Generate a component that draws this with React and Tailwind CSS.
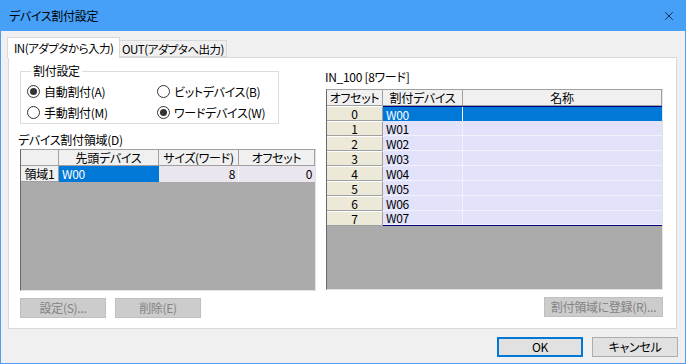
import { X } from 'lucide-react'

const font = "font-['Noto_Sans_CJK_JP',sans-serif] [font-feature-settings:'palt'] whitespace-nowrap tracking-[-0.3px]"

function Radio({ checked, label }) {
  return (
    <div className="flex items-center gap-[4px] h-[21px]">
      <span className="w-[13px] h-[13px] rounded-full border border-[#333] bg-white flex items-center justify-center">
        {checked && <span className="w-[7px] h-[7px] rounded-full bg-[#333]" />}
      </span>
      <span className="text-[12px] leading-[14px] text-black">{label}</span>
    </div>
  )
}

function Btn({ label, w, disabled, primary }) {
  const cls = disabled
    ? 'bg-[#cccccc] border border-[#bfbfbf] text-[#838383]'
    : primary
      ? 'bg-[#e1e1e1] border-2 border-[#0078d7] text-black'
      : 'bg-[#e1e1e1] border border-[#adadad] text-black'
  return (
    <div className={`${w} h-[20px] flex items-center justify-center text-[12px] leading-[14px] ${cls}`}>
      {label}
    </div>
  )
}

const hd = 'h-[16px] bg-[#f0f0f0] border-r border-b border-[#a0a0a0] flex items-center justify-center text-[12px] leading-[14px] overflow-hidden'

const devices = ['W00', 'W01', 'W02', 'W03', 'W04', 'W05', 'W06', 'W07']

export default function App() {
  return (
    <div className={`w-[686px] h-[364px] bg-[#f0f0f0] border-x border-b border-[#4a9ff5] flex flex-col ${font} text-black`}>
      {/* Title bar */}
      <div className="h-[31px] bg-[#46a0f8] flex items-center justify-between pl-[8px] pr-[9px] shrink-0">
        <span className="text-[12px] leading-[14px]">デバイス割付設定</span>
        <X className="w-[14px] h-[14px] text-black" strokeWidth={1.2} />
      </div>

      {/* Tabs */}
      <div className="flex items-end mt-[6px] pl-[6px] relative z-10 -mb-px">
        <div className="w-[113px] h-[21px] bg-white border border-b-0 border-[#d9d9d9] flex items-center pl-[6px] text-[11.5px] tracking-[-0.5px] leading-[14px]">
          IN(アダプタから入力)
        </div>
        <div className="w-[107px] h-[17px] bg-[#f0f0f0] border border-l-0 border-[#d9d9d9] flex items-center justify-center text-[11.5px] tracking-[-0.5px] leading-[14px] mb-px">
          OUT(アダプタへ出力)
        </div>
      </div>

      {/* Panel */}
      <div className="ml-[7px] w-[669px] h-[272px] bg-white border border-[#d9d9d9] flex pl-[11px] pt-[7px] shrink-0">
        {/* Left column */}
        <div className="w-[296px] flex flex-col">
          <fieldset className="w-[259px] h-[59px] border border-[#dcdcdc] pl-[6px]">
            <legend className="ml-[4px] px-[2px] text-[12px] leading-[12px]">割付設定</legend>
            <div className="grid grid-cols-[130px_1fr] mt-[4px]">
              <Radio checked label="自動割付(A)" />
              <Radio label="ビットデバイス(B)" />
              <Radio label="手動割付(M)" />
              <Radio checked label="ワードデバイス(W)" />
            </div>
          </fieldset>
          <div className="mt-[9px] -ml-[2px] text-[12px] leading-[14px]">デバイス割付領域(D)</div>
          <div className="mt-[2px] w-[296px] h-[142px] bg-[#ababab] border-t border-l border-t-[#a0a0a0] border-l-[#696969] border-r border-b border-r-[#e3e3e3] border-b-[#e3e3e3]">
            <div className="flex">
              <div className={`w-[38px] ${hd}`} />
              <div className={`w-[100px] ${hd}`}>先頭デバイス</div>
              <div className={`w-[80px] ${hd}`}>サイズ(ワード)</div>
              <div className={`flex-1 ${hd}`}>オフセット</div>
            </div>
            <div className="flex h-[16px] text-[12px] leading-[14px]">
              <div className="w-[38px] bg-[#f0f0f0] border-r border-b border-[#a0a0a0] flex items-center justify-center">領域1</div>
              <div className="w-[100px] bg-[#0078d7] text-white flex items-center pl-[3px]">W00</div>
              <div className="w-[80px] bg-[#ebe5f0] border-r border-white flex items-center justify-end pr-[3px]">8</div>
              <div className="flex-1 bg-[#ebe5f0] flex items-center justify-end pr-[3px]">0</div>
            </div>
          </div>
          <div className="flex gap-[9px] mt-[7px]">
            <Btn w="w-[86px]" label="設定(S)..." disabled />
            <Btn w="w-[86px]" label="削除(E)" disabled />
          </div>
        </div>

        {/* Right column */}
        <div className="w-[337px] ml-[10px] flex flex-col">
          <div className="mt-[5px] -ml-px text-[12px] leading-[14px]">IN_100 [8ワード]</div>
          <div className="mt-[5px] w-[337px] h-[201px] bg-[#ababab] border-t border-l border-t-[#a0a0a0] border-l-[#696969] border-r border-b border-r-[#e3e3e3] border-b-[#e3e3e3]">
            <div className="flex">
              <div className={`w-[56px] ${hd}`}>オフセット</div>
              <div className={`w-[80px] ${hd}`}>割付デバイス</div>
              <div className={`flex-1 ${hd}`}>名称</div>
            </div>
            {devices.map((d, i) => {
              const sel = i === 0
              return (
                <div key={d} className="flex h-[15px] text-[12px] leading-[13px]">
                  <div className="w-[56px] bg-[#ece9d8] border-r border-b border-[#a0a0a0] border-t border-t-white flex items-center justify-center">{i}</div>
                  <div className={`flex flex-1 ${sel ? 'border-t border-[#000080]' : ''} ${i === 7 ? 'border-b border-[#000080]' : ''}`}>
                    <div className={`w-[80px] flex items-center pl-[3px] border-r ${sel ? 'bg-[#0078d7] text-white border-white' : 'bg-[#e2e2fa] border-[#f2f2ff] border-b'}`}>{d}</div>
                    <div className={`flex-1 ${sel ? 'bg-[#0078d7]' : 'bg-[#e2e2fa] border-b border-[#f2f2ff]'}`} />
                  </div>
                </div>
              )
            })}
          </div>
          <div className="flex justify-end mt-[7px]">
            <Btn w="w-[119px]" label="割付領域に登録(R)..." disabled />
          </div>
        </div>
      </div>

      {/* Dialog buttons */}
      <div className="flex justify-end gap-[9px] mt-[8px] pr-[7px]">
        <Btn w="w-[86px]" label="OK" primary />
        <Btn w="w-[86px]" label="キャンセル" />
      </div>
    </div>
  )
}
